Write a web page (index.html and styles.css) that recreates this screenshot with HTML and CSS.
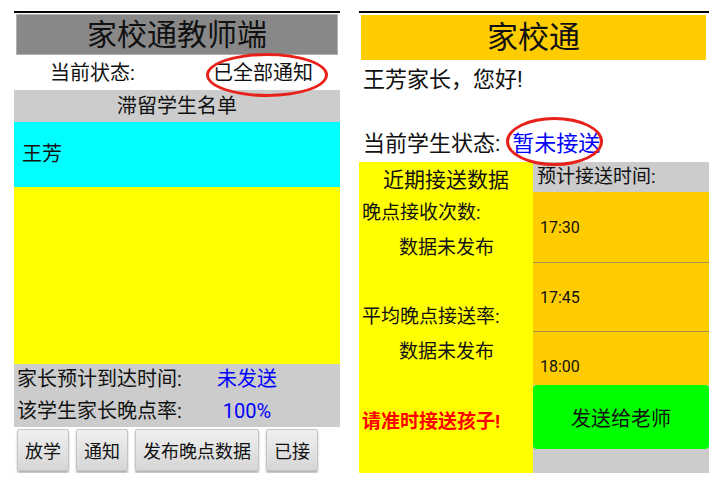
FILE: index.html
```html
<!DOCTYPE html>
<html lang="zh-CN">
<head>
    <meta charset="UTF-8">
    <meta name="viewport" content="width=device-width, initial-scale=1.0">
    <title>家校通</title>
    <link rel="stylesheet" href="styles.css">
</head>
<body>
    <div class="screens">
        <div class="phone teacher">
            <div class="title">家校通教师端</div>
            <div class="status">
                <span class="status-label">当前状态:</span>
                <span class="status-value circled">已全部通知</span>
            </div>
            <div class="list-head">滞留学生名单</div>
            <div class="list">
                <div class="list-item">王芳</div>
            </div>
            <div class="info">
                <div class="info-row">
                    <span class="info-label">家长预计到达时间:</span>
                    <span class="info-value">未发送</span>
                </div>
                <div class="info-row">
                    <span class="info-label">该学生家长晚点率:</span>
                    <span class="info-value">100%</span>
                </div>
            </div>
            <div class="actions">
                <button class="btn">放学</button>
                <button class="btn">通知</button>
                <button class="btn">发布晚点数据</button>
                <button class="btn">已接</button>
            </div>
        </div>

        <div class="phone parent">
            <div class="title">家校通</div>
            <div class="greeting">王芳家长，您好!</div>
            <div class="p-status">
                <span>当前学生状态:</span>
                <span class="p-status-value circled">暂未接送</span>
            </div>
            <div class="board">
                <div class="stats">
                    <div class="stats-title">近期接送数据</div>
                    <div class="stats-label">晚点接收次数:</div>
                    <div class="stats-value">数据未发布</div>
                    <div class="stats-label second">平均晚点接送率:</div>
                    <div class="stats-value">数据未发布</div>
                    <div class="reminder">请准时接送孩子!</div>
                </div>
                <div class="times">
                    <div class="times-head">预计接送时间:</div>
                    <div class="slot">17:30</div>
                    <div class="slot">17:45</div>
                    <div class="slot last">18:00</div>
                    <button class="send">发送给老师</button>
                </div>
            </div>
        </div>
    </div>
</body>
</html>
```

FILE: styles.css
```css
body {
    margin: 0;
    padding: 0;
    background-color: #fff;
    font-family: Roboto, "Noto Sans CJK SC", sans-serif;
    color: #111;
}

.screens {
    display: flex;
    align-items: flex-start;
    gap: 19px;
    padding: 11px 0 0 14px;
}

.phone {
    border-top: 2px solid #000;
}

/* teacher side */
.teacher {
    width: 326px;
}
.teacher .title {
    margin: 1px 2px 0 2px;
    height: 39px;
    line-height: 39px;
    background-color: #888;
    border: 1px solid #b0b0b0;
    text-align: center;
    font-size: 30px;
}
.status {
    display: flex;
    height: 35px;
    line-height: 37px;
    font-size: 20px;
    padding-left: 36px;
}
.status-label {
    width: 163px;
}
.circled {
    position: relative;
    display: inline-block;
}
.circled::after {
    content: "";
    position: absolute;
    border: 3px solid #e8221a;
    border-radius: 50%;
}
.status-value {
    height: 35px;
}
.status-value::after {
    left: -7px;
    top: -2px;
    width: 116px;
    height: 38px;
}
.list-head {
    height: 32px;
    line-height: 32px;
    background-color: #ccc;
    text-align: center;
    font-size: 20px;
}
.list {
    height: 242px;
    background-color: #ff0;
}
.list-item {
    height: 65px;
    line-height: 65px;
    padding-left: 8px;
    background-color: #0ff;
    font-size: 20px;
}
.info {
    background-color: #ccc;
    padding-left: 3px;
    font-size: 20px;
}
.info-row {
    display: flex;
    height: 31.5px;
    line-height: 31.5px;
}
.info-label {
    width: 183px;
}
.info-value {
    width: 94px;
    text-align: center;
    color: #0000ff;
}
.actions {
    display: flex;
    gap: 7px;
    padding: 2px 0 0 3px;
}
.btn {
    height: 42px;
    padding: 0 7px;
    font-family: Roboto, "Noto Sans CJK SC", sans-serif;
    font-size: 18px;
    color: #111;
    background: linear-gradient(#f0f0f0, #d6d6d6);
    border: 1px solid #c4c4c4;
    border-radius: 2px;
    box-shadow: 0 2px 2px rgba(0, 0, 0, 0.3);
}

/* parent side */
.parent {
    width: 350px;
}
.parent .title {
    margin: 2px 3px 0 2px;
    height: 45px;
    line-height: 45px;
    background-color: #fc0;
    text-align: center;
    font-size: 31px;
}
.greeting {
    height: 40px;
    line-height: 40px;
    padding-left: 4px;
    font-size: 22px;
}
.p-status {
    display: flex;
    margin-top: 25px;
    height: 37px;
    line-height: 37px;
    padding-left: 4px;
    font-size: 22px;
}
.p-status-value {
    height: 37px;
    margin-left: 12px;
    color: #0000ff;
}
.p-status-value::after {
    left: -6px;
    top: -8px;
    width: 91px;
    height: 43px;
}
.board {
    display: grid;
    grid-template-columns: 174px 176px;
    height: 311px;
}
.stats {
    background-color: #ff0;
    font-size: 19px;
}
.stats-title {
    height: 36px;
    line-height: 36px;
    text-align: center;
    font-size: 21px;
}
.stats-label {
    height: 30px;
    line-height: 30px;
    padding-left: 3px;
}
.stats-label.second {
    margin-top: 34px;
}
.stats-value {
    height: 40px;
    line-height: 40px;
    padding-left: 40px;
}
.reminder {
    margin-top: 35px;
    height: 30px;
    line-height: 30px;
    padding-left: 3px;
    color: #f00;
    font-weight: bold;
}
.times {
    display: flex;
    flex-direction: column;
    background-color: #ccc;
}
.times-head {
    height: 30px;
    line-height: 30px;
    padding-left: 4px;
    font-size: 19px;
}
.slot {
    display: flex;
    align-items: center;
    height: 70px;
    padding-left: 7px;
    background-color: #fc0;
    font-size: 16px;
}
.slot + .slot {
    border-top: 1px solid #a89058;
    height: 68px;
}
.slot.last {
    height: 54px;
    box-sizing: border-box;
    align-items: flex-end;
    padding-bottom: 9px;
}
.send {
    height: 64px;
    border: none;
    border-radius: 4px;
    background-color: #0f0;
    font-family: Roboto, "Noto Sans CJK SC", sans-serif;
    font-size: 20px;
    color: #111;
}
```
